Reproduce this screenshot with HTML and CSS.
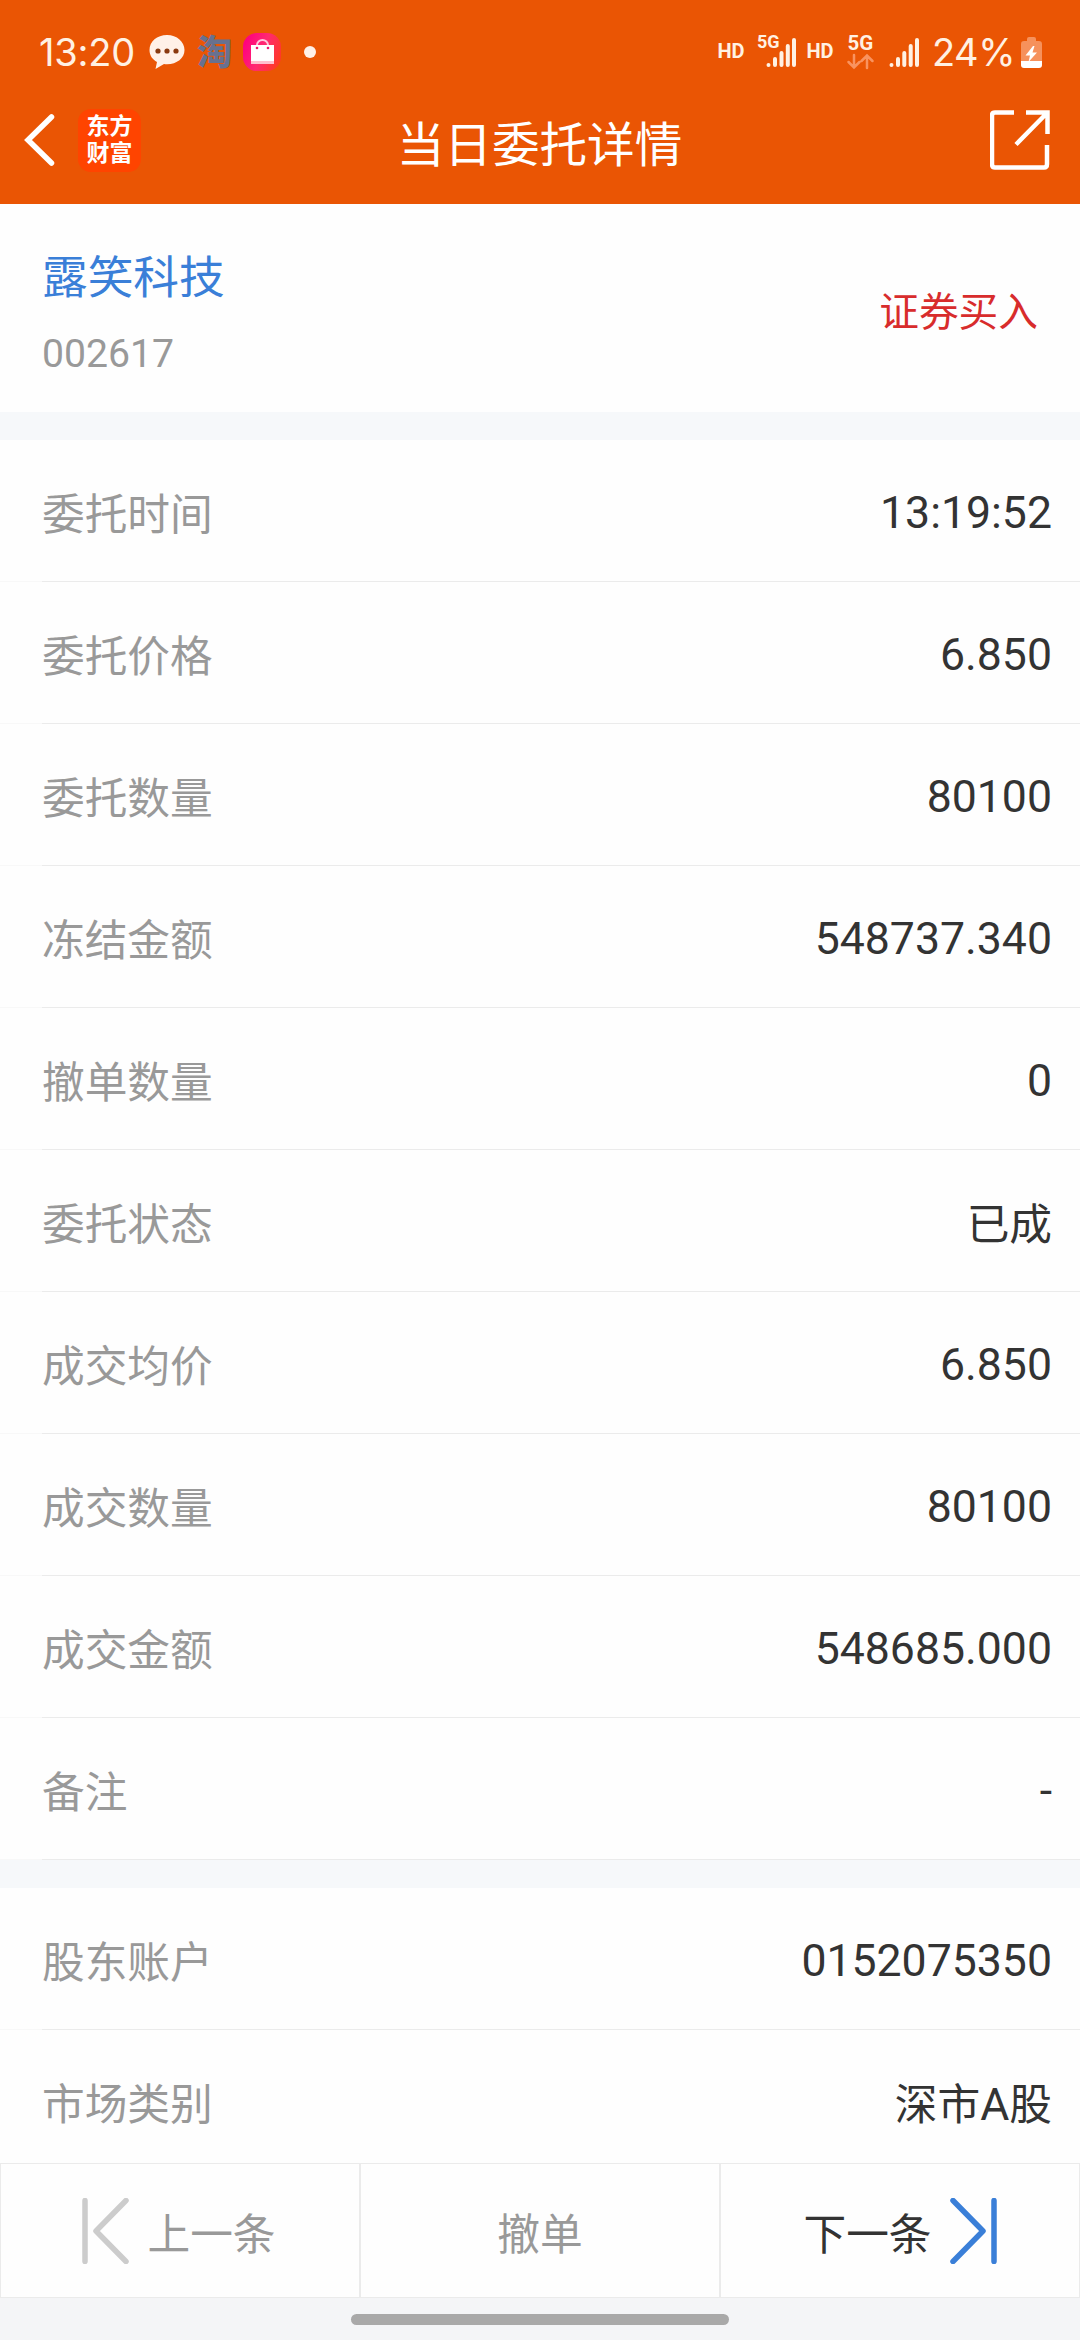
FILE: index.html
```html
<!DOCTYPE html>
<html lang="zh-CN">
<head>
  <meta charset="UTF-8">
  <meta name="viewport" content="width=device-width, initial-scale=1.0">
  <title>当日委托详情</title>
  <link rel="stylesheet" href="styles.css">
</head>
<body>
  <header class="header">
    <div class="status-bar">
      <span class="clock">13:20</span>
      <svg class="icon-chat" width="36" height="36" viewBox="0 0 36 36">
        <path d="M18 1C8 1 0.500 7.500 0.500 16c0 5.500 3 9.500 7.500 12l-1.500 7 8.500-5c1 .2 2 .2 3 .2 10 0 17.500-6 17.500-14.200S28 1 18 1z" fill="#fff1e8"/>
        <circle cx="9" cy="17" r="2.600" fill="#8a3a10"/>
        <circle cx="18" cy="17" r="2.600" fill="#8a3a10"/>
        <circle cx="27" cy="17" r="2.600" fill="#8a3a10"/>
      </svg>
      <span class="icon-tao">淘</span>
      <svg class="icon-bag" width="38" height="38" viewBox="0 0 38 38">
        <defs>
          <linearGradient id="bag" x1="0" y1="0.300" x2="1" y2="0.700">
            <stop offset="0" stop-color="#ff0080"/>
            <stop offset="0.500" stop-color="#ff2a70"/>
            <stop offset="1" stop-color="#ff3a20"/>
          </linearGradient>
        </defs>
        <rect width="38" height="38" rx="14" fill="url(#bag)"/>
        <path d="M14 15v-3a5.500 5 0 0 1 11 0v3" fill="none" stroke="#ffc4dc" stroke-width="2"/>
        <path d="M8 12h23v19H8z" fill="#fff"/>
        <path d="M8 28h23v3H8z" fill="#ffc0cf"/>
        <circle cx="14" cy="15" r="1.300" fill="#f0146e"/>
        <circle cx="25" cy="15" r="1.300" fill="#f0146e"/>
      </svg>
      <span class="dot"></span>
      <svg class="signals" width="210" height="40" viewBox="716 33 210 40">
        <g class="signal-text">
          <text x="717.500" y="58.500" font-size="20">HD</text>
          <text x="757" y="48.500" font-size="18">5G</text>
          <text x="806.500" y="58.500" font-size="20">HD</text>
          <text x="847.500" y="50.500" font-size="20.500">5G</text>
        </g>
        <g class="signal-bars">
          <path d="M768.500 66v0M775 60v6M781.500 54v12M787.800 47v19M794 41v25"/>
          <path d="M891.500 66v0M898 60v6M904.300 54v12M910.700 47v19M917 41v25"/>
        </g>
        <path class="signal-data" d="M854 56v12M848.500 63l5.500 5.500 5.500-5.500M867 69V57M861.500 62l5.500-5.500 5.500 5.500"/>
      </svg>
      <span class="battery-text">24%</span>
      <svg class="battery" width="21" height="31" viewBox="0 0 21 31">
        <path d="M6 4V2q0-2 2-2h5q2 0 2 2v2h3q3 0 3 3v17H0V7q0-3 3-3z" fill="#f6915c"/>
        <path d="M0 24h21v4q0 3-3 3H3q-3 0-3-3z" fill="#fff"/>
        <path d="M12 9L4.500 18.500H9L7.500 25 16 15.500h-4.500L13.500 9z" fill="#fff"/>
      </svg>
    </div>
    <div class="nav-bar">
      <div class="nav-left">
        <svg width="32" height="54" viewBox="0 0 32 54">
          <path d="M28.500 4L5 27l23.500 23" fill="none" stroke="#fff" stroke-width="5.500" stroke-linecap="round"/>
        </svg>
        <div class="logo"><span>东方</span><span>财富</span></div>
      </div>
      <h1 class="title">当日委托详情</h1>
      <svg class="share" width="60" height="60" viewBox="0 0 60 60">
        <path d="M24 2.500H5q-3 0-3 3V54q0 3.500 3 3.500h49q3 0 3-3.500V35M36 2.500h21.500V24M57 3L26 34.500"/>
      </svg>
    </div>
  </header>

  <main class="content">
    <section class="stock">
      <div>
        <div class="stock-name">露笑科技</div>
        <div class="stock-code">002617</div>
      </div>
      <div class="side">证券买入</div>
    </section>

    <section class="group">
      <div class="row"><span class="label">委托时间</span><span class="value">13:19:52</span></div>
      <div class="row"><span class="label">委托价格</span><span class="value">6.850</span></div>
      <div class="row"><span class="label">委托数量</span><span class="value">80100</span></div>
      <div class="row"><span class="label">冻结金额</span><span class="value">548737.340</span></div>
      <div class="row"><span class="label">撤单数量</span><span class="value">0</span></div>
      <div class="row"><span class="label">委托状态</span><span class="value cn">已成</span></div>
      <div class="row"><span class="label">成交均价</span><span class="value">6.850</span></div>
      <div class="row"><span class="label">成交数量</span><span class="value">80100</span></div>
      <div class="row"><span class="label">成交金额</span><span class="value">548685.000</span></div>
      <div class="row"><span class="label">备注</span><span class="value">-</span></div>
    </section>

    <section class="group">
      <div class="row"><span class="label">股东账户</span><span class="value">0152075350</span></div>
      <div class="row"><span class="label">市场类别</span><span class="value cn">深市<span class="latin">A</span>股</span></div>
    </section>
  </main>

  <footer class="actions">
    <div class="action prev">
      <svg width="48" height="66" viewBox="0 0 48 66">
        <path d="M3 2.500v61M44 2.500L14 33l30 30.500"/>
      </svg>
      <span>上一条</span>
    </div>
    <div class="action cancel"><span>撤单</span></div>
    <div class="action next">
      <span>下一条</span>
      <svg width="48" height="66" viewBox="0 0 48 66">
        <path d="M45 2.500v61M4 2.500L34 33 4 63.500"/>
      </svg>
    </div>
  </footer>
  <div class="home-bar"><span></span></div>
</body>
</html>
```
FILE: styles.css
```css
* {
  box-sizing: border-box;
}
body {
  margin: 0;
  width: 1080px;
  height: 2340px;
  display: flex;
  flex-direction: column;
  overflow: hidden;
  background-color: #f6f8fa;
  color: #333;
  font-family: Roboto, "Noto Sans CJK SC", sans-serif;
}
svg {
  display: block;
  flex: none;
}

/* header */
.header {
  flex: none;
  height: 204px;
  background-color: #ea5504;
  color: #fff;
}
.status-bar {
  height: 104px;
  display: flex;
  align-items: center;
  padding: 0 38px 0 39px;
  color: #fff1e3;
}
.clock, .battery-text {
  font-family: Inter, sans-serif;
  font-size: 38px;
  white-space: nowrap;
}
.clock {
  width: 110px;
  letter-spacing: -0.2px;
}
.icon-tao {
  width: 36px;
  margin-left: 12px;
  padding-top: 3px;
  font-size: 35px;
  line-height: 36px;
  font-weight: 900;
  color: #68718f;
}
.icon-bag {
  margin-left: 10px;
}
.dot {
  width: 12px;
  height: 12px;
  margin-left: 23px;
  border-radius: 50%;
  background-color: #fff1e8;
}
.signals {
  margin-left: auto;
}
.signal-text {
  fill: #fff1e3;
  font-weight: 700;
}
.signal-bars, .signal-data {
  fill: none;
  stroke: #fff1e3;
  stroke-width: 4;
  stroke-linecap: round;
}
.signal-data {
  stroke: #f9935f;
  stroke-width: 2.5;
}
.battery-text {
  width: 88px;
  margin-left: 6px;
  letter-spacing: -0.5px;
}
.battery {
  margin-left: 1px;
}
.nav-bar {
  height: 72px;
  display: grid;
  grid-template-columns: 1fr auto 1fr;
  align-items: center;
  padding: 0 30px 0 23px;
}
.nav-left {
  display: flex;
  align-items: center;
  gap: 23px;
}
.logo {
  width: 63px;
  height: 63px;
  padding-top: 4px;
  border-radius: 13px;
  background-color: #ff4400;
  display: flex;
  flex-direction: column;
  align-items: center;
  font-size: 23px;
  line-height: 27px;
  font-weight: 700;
}
.title {
  margin: 0;
  padding: 12px 0 0 6px;
  font-size: 47.6px;
  line-height: 60px;
  font-weight: 400;
}
.share {
  justify-self: end;
  fill: none;
  stroke: #fff;
  stroke-width: 4.5;
}

/* order detail */
.content {
  flex: 1;
  min-height: 0;
  overflow: hidden;
  display: flex;
  flex-direction: column;
  gap: 28px;
}
.stock {
  flex: none;
  height: 208px;
  display: flex;
  justify-content: space-between;
  align-items: center;
  padding: 0 42px;
  background-color: #fefefe;
}
.stock-name {
  padding-top: 13px;
  font-size: 45.7px;
  line-height: 68px;
  color: #3a7fd8;
}
.stock-code {
  margin-top: 11px;
  font-size: 39.2px;
  line-height: 60px;
  color: #999;
}
.side {
  font-size: 39.7px;
  color: #d82c2c;
}
.group {
  flex: none;
  background-color: #fefefe;
}
.row {
  height: 142px;
  display: flex;
  justify-content: space-between;
  align-items: center;
  padding: 4px 28px 0 42px;
  background: linear-gradient(90deg, #f8f8f8 42px, #ebebeb 42px) 0 100% / 100% 1px no-repeat;
}
.label {
  padding-bottom: 4px;
  font-size: 42.7px;
  color: #999;
}
.value {
  font-size: 44.6px;
}
.value.cn {
  padding-bottom: 4px;
  font-size: 42.7px;
}
.value .latin {
  font-size: 44.6px;
}

/* bottom buttons */
.actions {
  flex: none;
  height: 135px;
  display: grid;
  grid-template-columns: repeat(3, 1fr);
}
.action {
  display: flex;
  justify-content: center;
  align-items: center;
  gap: 17px;
  border: 1px solid #ebebeb;
  background-color: #fefefe;
  font-size: 42.7px;
}
.action svg {
  fill: none;
  stroke-width: 5.5;
  stroke-linecap: round;
  stroke-linejoin: round;
}
.prev, .cancel {
  color: #999;
}
.prev {
  padding-right: 2px;
}
.prev svg {
  stroke: #ccc;
}
.next svg {
  stroke: #3a7fd8;
}
.home-bar {
  flex: none;
  height: 42px;
  padding-top: 16px;
  background-color: #f4f5f7;
}
.home-bar span {
  display: block;
  width: 378px;
  height: 11px;
  margin: 0 auto;
  border-radius: 6px;
  background-color: #a9a9a9;
}
```
